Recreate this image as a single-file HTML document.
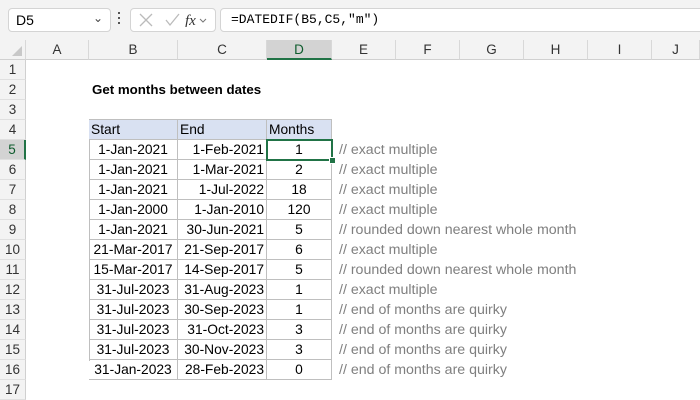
<!DOCTYPE html><html><head><style>
body{margin:0;width:700px;height:400px;overflow:hidden;background:#fff;font-family:"Liberation Sans",sans-serif;position:relative}
.a{position:absolute}
.tb{background:#f3f3f3;left:0;top:0;width:700px;height:40px}
.box{position:absolute;background:#fff;border:1px solid #d4d4d4;border-radius:4px;height:22px;top:8px}
.hdr{position:absolute;top:40px;height:20px;background:#f3f3f3;border-right:1px solid #d8d8d8;border-bottom:1px solid #d0d0d0;box-sizing:border-box;font-size:13.5px;color:#333;text-align:center;line-height:20px}
.rh{position:absolute;left:0;width:26px;height:20px;background:#f3f3f3;border-right:1px solid #d0d0d0;border-bottom:1px solid #e0e0e0;box-sizing:border-box;font-size:13.5px;color:#333;text-align:center;line-height:20px}
.c{position:absolute;height:20px;line-height:20px;font-size:13.8px;color:#000;box-sizing:border-box;border-right:1px solid #bfbfbf;border-bottom:1px solid #bfbfbf;white-space:nowrap;padding:0 4px;overflow:hidden}
.r{text-align:right}.m{text-align:center}
.cm{position:absolute;left:339px;font-size:14.2px;color:#7f7f7f;line-height:20px;white-space:nowrap}
</style></head><body>
<div class="a tb"></div>
<div class="box" style="left:8px;width:101px"><span class="a" style="left:7px;top:3px;font-size:14px">D5</span><span class="a" style="left:84px;top:2px;font-size:12px;color:#444">&#8964;</span></div>
<div class="a" style="left:118px;top:12px;width:2px;height:2px;background:#555;box-shadow:0 5px #555,0 10px #555"></div>
<div class="box" style="left:130px;width:84px">
<svg class="a" style="left:8px;top:4px" width="70" height="14"><path d="M1 1l12 12M13 1L1 13" stroke="#bbb" stroke-width="1.3"/><path d="M27 7l4 5 9-11" stroke="#bbb" stroke-width="1.3" fill="none"/><text x="46" y="12" font-family="Liberation Serif" font-style="italic" font-size="15" fill="#333">fx</text><path d="M61 6l3 3 3-3" stroke="#777" fill="none"/></svg></div>
<div class="box" style="left:220px;width:490px"><span class="a" style="left:10px;top:3px;font-size:13px;font-family:'Liberation Mono',monospace">=DATEDIF(B5,C5,"m")</span></div>
<div class="hdr" style="left:0;width:26px"><svg width="26" height="20"><path d="M22 6v10H12z" fill="#c8c8c8"/></svg></div>
<div class="hdr" style="left:26px;width:63px">A</div>
<div class="hdr" style="left:89px;width:89px">B</div>
<div class="hdr" style="left:178px;width:89px">C</div>
<div class="hdr" style="left:267px;width:65px;background:#d3d3d3;border-bottom:2px solid #217346;color:#0f5c2e">D</div>
<div class="hdr" style="left:332px;width:64px">E</div>
<div class="hdr" style="left:396px;width:64px">F</div>
<div class="hdr" style="left:460px;width:64px">G</div>
<div class="hdr" style="left:524px;width:64px">H</div>
<div class="hdr" style="left:588px;width:64px">I</div>
<div class="hdr" style="left:652px;width:48px">J</div>
<div class="rh" style="top:60px">1</div><div class="rh" style="top:80px">2</div><div class="rh" style="top:100px">3</div><div class="rh" style="top:120px">4</div>
<div class="rh" style="top:140px;background:#d3d3d3;border-right:2px solid #217346;color:#0f5c2e">5</div>
<div class="rh" style="top:160px">6</div><div class="rh" style="top:180px">7</div><div class="rh" style="top:200px">8</div><div class="rh" style="top:220px">9</div><div class="rh" style="top:240px">10</div><div class="rh" style="top:260px">11</div><div class="rh" style="top:280px">12</div><div class="rh" style="top:300px">13</div><div class="rh" style="top:320px">14</div><div class="rh" style="top:340px">15</div><div class="rh" style="top:360px">16</div><div class="rh" style="top:380px">17</div>
<div class="a" style="left:0;top:60px;width:26px;height:340px;background:#f3f3f3;z-index:-1"></div>
<div class="a" style="left:92px;top:80px;font-size:13.3px;font-weight:bold;line-height:20px">Get months between dates</div>
<div class="a" style="left:89px;top:119px;width:243px;height:242px;border-left:1px solid #bfbfbf;border-top:1px solid #bfbfbf;box-sizing:border-box"></div>
<div class="c" style="left:89px;top:120px;width:89px;background:#d9e1f2;padding-left:2px">Start</div>
<div class="c" style="left:178px;top:120px;width:89px;background:#d9e1f2;padding-left:2px">End</div>
<div class="c" style="left:267px;top:120px;width:65px;background:#d9e1f2;padding-left:2px">Months</div>
<div id="rows"></div>
<script>
var d=[["1-Jan-2021","1-Feb-2021","1","exact multiple"],["1-Jan-2021","1-Mar-2021","2","exact multiple"],["1-Jan-2021","1-Jul-2022","18","exact multiple"],["1-Jan-2000","1-Jan-2010","120","exact multiple"],["1-Jan-2021","30-Jun-2021","5","rounded down nearest whole month"],["21-Mar-2017","21-Sep-2017","6","exact multiple"],["15-Mar-2017","14-Sep-2017","5","rounded down nearest whole month"],["31-Jul-2023","31-Aug-2023","1","exact multiple"],["31-Jul-2023","30-Sep-2023","1","end of months are quirky"],["31-Jul-2023","31-Oct-2023","3","end of months are quirky"],["31-Jul-2023","30-Nov-2023","3","end of months are quirky"],["31-Jan-2023","28-Feb-2023","0","end of months are quirky"]];
var h="";d.forEach(function(r,i){var t=140+20*i;
h+='<div class="c m" style="left:89px;top:'+t+'px;width:89px;padding:0">'+r[0]+'</div><div class="c r" style="left:178px;top:'+t+'px;width:89px;padding-right:2px">'+r[1]+'</div><div class="c m" style="left:267px;top:'+t+'px;width:65px">'+r[2]+'</div><div class="cm" style="top:'+t+'px">// '+r[3]+'</div>';});
document.getElementById("rows").outerHTML=h;
</script>
<div class="a" style="left:266px;top:139px;width:67px;height:22px;border:2px solid #217346;box-sizing:border-box"></div>
<div class="a" style="left:329px;top:157px;width:5px;height:5px;background:#217346;border:1px solid #fff"></div>
</body></html>
